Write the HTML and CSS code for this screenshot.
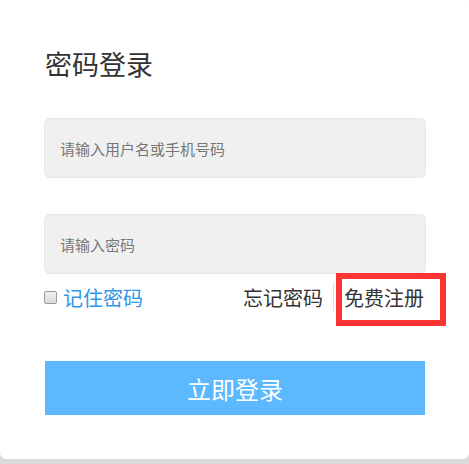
FILE: index.html
```html
<!DOCTYPE html>
<html>
<head>
  <meta charset="utf-8">
  <title>密码登录</title>
  <link rel="stylesheet" href="styles.css">
</head>
<body>
  <div class="card">
    <h1 class="title">密码登录</h1>

    <form class="login-form">
      <input class="field" type="text" placeholder="请输入用户名或手机号码">
      <input class="field field-pass" type="password" placeholder="请输入密码">

      <div class="options">
        <label class="remember">
          <input type="checkbox" class="check">
          <span>记住密码</span>
        </label>
        <div class="links">
          <a href="#" class="link">忘记密码</a>
          <span class="divider"></span>
          <a href="#" class="link link-register">免费注册</a>
        </div>
      </div>

      <button type="button" class="submit">立即登录</button>
    </form>
  </div>
</body>
</html>
```

FILE: styles.css
```css
html, body {
  margin: 0;
  padding: 0;
}
body {
  background: #dadada;
  font-family: "Noto Sans CJK SC", "Noto Sans", sans-serif;
  color: #333;
}
.card {
  background: #fff;
  border-radius: 6px;
  margin-top: -4px;
  padding: 48px 43px 44px 44px;
  height: 463px;
  box-sizing: border-box;
}
.title {
  margin: 0;
  font-size: 27px;
  font-weight: normal;
  line-height: 40px;
  padding-left: 1px;
}
.login-form {
  margin-top: 34px;
}
.field {
  display: block;
  width: 100%;
  height: 60px;
  box-sizing: border-box;
  margin: 0;
  padding: 0 15px;
  background: #f0f0f0;
  border: 1px solid #e6e6e6;
  border-radius: 6px;
  font-family: inherit;
  font-size: 15px;
  outline: none;
}
.field::placeholder {
  color: #777;
}
.field-pass {
  margin-top: 36px;
}
.options {
  display: flex;
  justify-content: space-between;
  align-items: center;
  height: 30px;
  margin-top: 8px;
  font-size: 20px;
}
.remember {
  display: flex;
  align-items: center;
  gap: 6px;
  color: #2f96e8;
  cursor: pointer;
}
.check {
  appearance: none;
  width: 13px;
  height: 13px;
  margin: 1px 0 0 0;
  border: 1px solid #9a9a9a;
  border-radius: 2px;
  background: linear-gradient(#f2f2f2, #d8d8d8);
}
.links {
  display: flex;
  align-items: center;
  gap: 10px;
  padding-right: 2px;
}
.link {
  color: #333;
  text-decoration: none;
}
.divider {
  width: 1px;
  height: 28px;
  background: #ddd;
}
.link-register {
  position: relative;
}
/* red highlight drawn over the register link */
.link-register::after {
  content: "";
  position: absolute;
  left: -8px;
  right: -22px;
  top: -10px;
  bottom: -14px;
  border: 6px solid #fc3434;
}
.submit {
  display: block;
  width: 380px;
  height: 54px;
  margin: 49px 0 0 1px;
  background: #5cb8ff;
  border: none;
  color: #fff;
  font-family: inherit;
  font-size: 24px;
  cursor: pointer;
}
```
